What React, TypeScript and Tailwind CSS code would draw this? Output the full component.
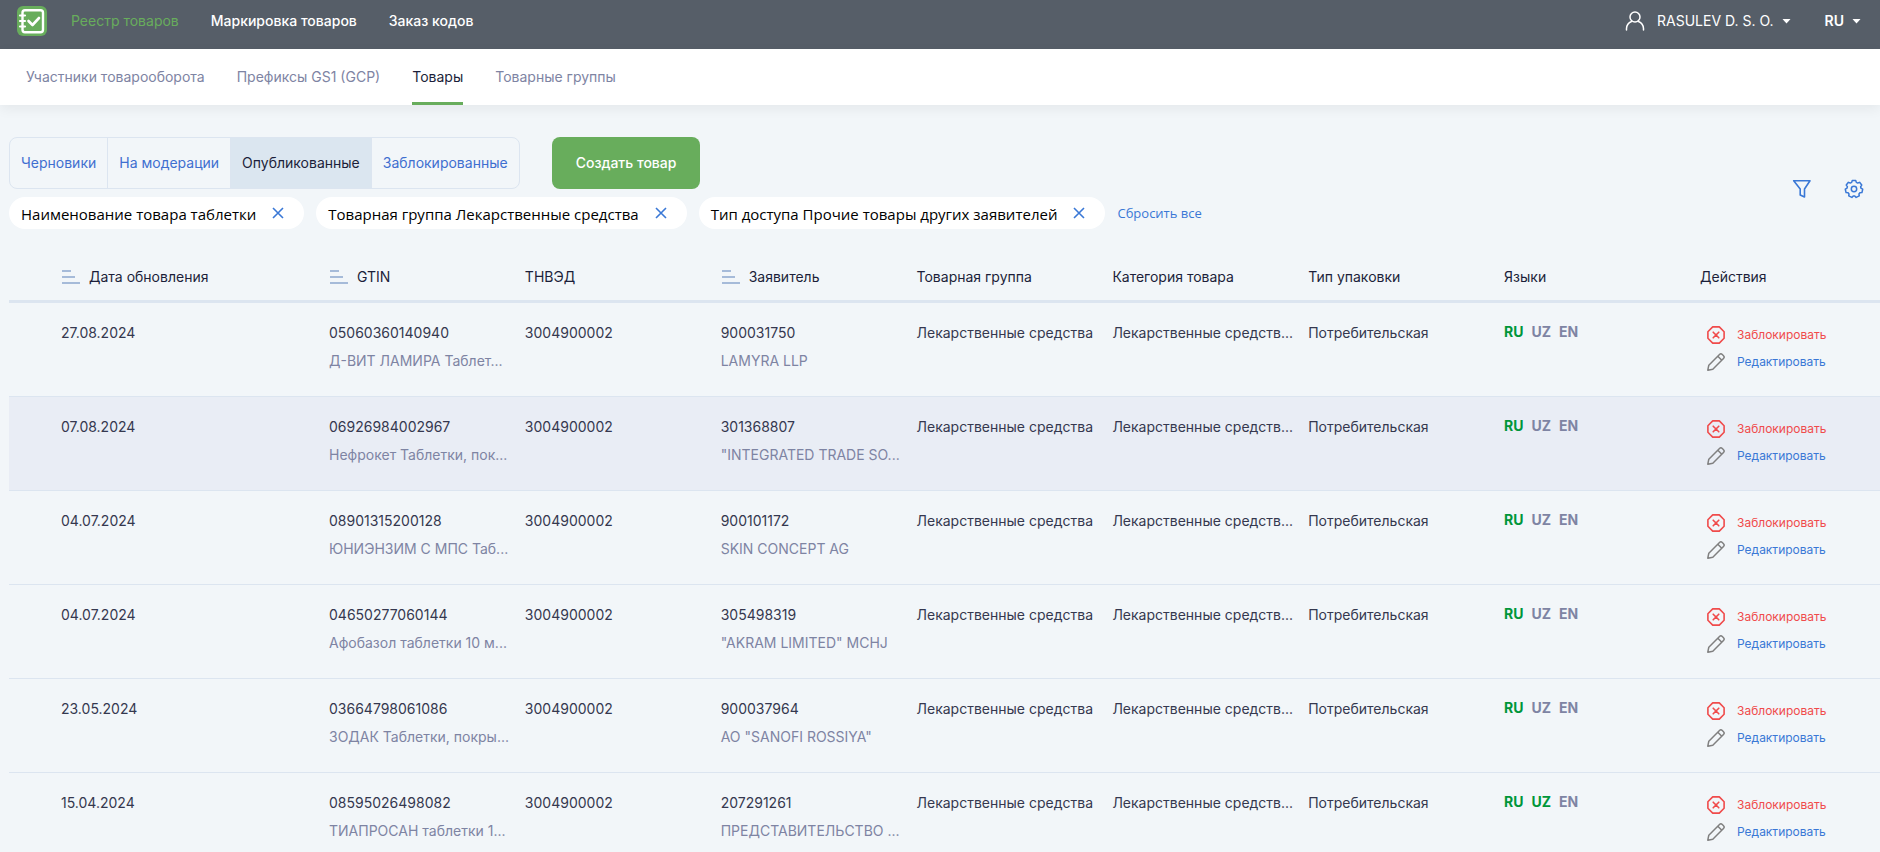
import type { ReactNode } from "react";

const mainNav = ["Реестр товаров", "Маркировка товаров", "Заказ кодов"];
const subNav = ["Участники товарооборота", "Префиксы GS1 (GCP)", "Товары", "Товарные группы"];
const statuses = ["Черновики", "На модерации", "Опубликованные", "Заблокированные"];
const filters = [
  "Наименование товара таблетки",
  "Товарная группа Лекарственные средства",
  "Тип доступа Прочие товары других заявителей",
];

interface Row {
  date: string;
  gtin: string;
  name: string;
  inn: string;
  company: string;
  uz?: boolean;
}

const rows: Row[] = [
  { date: "27.08.2024", gtin: "05060360140940", name: "Д-ВИТ ЛАМИРА Таблет...", inn: "900031750", company: "LAMYRA LLP" },
  { date: "07.08.2024", gtin: "06926984002967", name: "Нефрокет Таблетки, пок...", inn: "301368807", company: "\"INTEGRATED TRADE SO..." },
  { date: "04.07.2024", gtin: "08901315200128", name: "ЮНИЭНЗИМ С МПС Таб...", inn: "900101172", company: "SKIN CONCEPT AG" },
  { date: "04.07.2024", gtin: "04650277060144", name: "Афобазол таблетки 10 м...", inn: "305498319", company: "\"AKRAM LIMITED\" MCHJ" },
  { date: "23.05.2024", gtin: "03664798061086", name: "ЗОДАК Таблетки, покры...", inn: "900037964", company: "АО \"SANOFI ROSSIYA\"" },
  { date: "15.04.2024", gtin: "08595026498082", name: "ТИАПРОСАН таблетки 1...", inn: "207291261", company: "ПРЕДСТАВИТЕЛЬСТВО ...", uz: true },
];

function Logo() {
  return (
    <svg width="30" height="30" viewBox="0 0 30 30" fill="none" aria-hidden="true">
      <rect width="30" height="30" rx="6" fill="#68ad5c" />
      <rect x="5.500" y="4.200" width="20.500" height="22" rx="2.500" stroke="#fff" strokeWidth="2.400" />
      <path d="M3 9.500h5M3 15h5M3 20.500h5" stroke="#fff" strokeWidth="2.200" strokeLinecap="round" />
      <path d="M11.500 15l4 4 6.500-7" stroke="#fff" strokeWidth="2.600" strokeLinecap="round" strokeLinejoin="round" />
    </svg>
  );
}

function UserIcon() {
  return (
    <svg width="20" height="20" viewBox="0 0 20 20" fill="none" stroke="#fff" strokeWidth="1.5" aria-hidden="true">
      <circle cx="10" cy="6" r="5" />
      <path d="M1.500 19v-1.500a8 8 0 0 1 5-7M18.500 19v-1.500a8 8 0 0 0-5-7" strokeLinecap="round" />
    </svg>
  );
}

function Caret() {
  return (
    <svg width="9" height="5" viewBox="0 0 9 5" fill="#fff" aria-hidden="true">
      <path d="M0.500 0h8L4.500 4.500z" />
    </svg>
  );
}

function FilterIcon() {
  return (
    <svg width="20" height="20" viewBox="0 0 20 20" fill="none" stroke="#3a78d6" strokeWidth="1.600" strokeLinejoin="round" aria-hidden="true">
      <path d="M1.700 1.700h16.300l-5.500 8.300v8l-4.300-2v-6z" />
    </svg>
  );
}

const gearPoints = Array.from({ length: 7 }, (_, k) => {
  const mid = -Math.PI / 2 + (k * 2 * Math.PI) / 7;
  return [
    [-0.2, 8.7],
    [0.2, 8.7],
    [0.34, 7],
    [0.56, 7],
  ]
    .map(([da, r]) => `${(10 + r * Math.cos(mid + da)).toFixed(2)},${(10 + r * Math.sin(mid + da)).toFixed(2)}`)
    .join(" ");
}).join(" ");

function GearIcon() {
  return (
    <svg width="20" height="20" viewBox="0 0 20 20" fill="none" stroke="#3a78d6" strokeWidth="1.5" strokeLinejoin="round" aria-hidden="true">
      <circle cx="10" cy="10" r="2.700" />
      <polygon points={gearPoints} />
    </svg>
  );
}

function SortIcon() {
  return (
    <svg width="18" height="16" viewBox="0 0 18 16" fill="#a6bbd9" aria-hidden="true">
      <path d="M0 1h9v2H0zM0 7h13v2H0zM0 13h18v2H0z" />
    </svg>
  );
}

function CloseIcon() {
  return (
    <svg width="12" height="12" viewBox="0 0 12 12" fill="none" stroke="#3a78d6" strokeWidth="1.6" aria-hidden="true">
      <path d="M1 1l10 10M11 1L1 11" />
    </svg>
  );
}

function BlockIcon() {
  return (
    <svg width="18" height="18" viewBox="0 0 18 18" fill="none" stroke="#f04b4b" strokeWidth="1.600" strokeLinejoin="round" aria-hidden="true">
      <path d="M5.700 0.900h6.600L17.100 5.700v6.600L12.300 17.100H5.700L0.900 12.300V5.700z" />
      <path d="M6.200 6.200l5.600 5.600M11.800 6.200l-5.600 5.600" strokeLinecap="round" />
    </svg>
  );
}

function PencilIcon() {
  return (
    <svg width="18" height="18" viewBox="0 0 18 18" fill="none" stroke="#808080" strokeWidth="1.500" strokeLinejoin="round" aria-hidden="true">
      <path d="M0.800 17.200l1-5L12.500 1.500a2 2 0 0 1 2.800 0l1.200 1.200a2 2 0 0 1 0 2.800L5.800 16.200zM10.800 3.200l4 4" />
    </svg>
  );
}

function Th({ children, sortable }: { children?: ReactNode; sortable?: boolean }) {
  return (
    <th scope="col" className="h-[50px] border-b-[3px] border-[#dce5f0] p-0 text-left font-normal">
      {sortable ? (
        <button type="button" className="flex items-center gap-[9px] pl-px">
          <SortIcon />
          {children}
        </button>
      ) : (
        children
      )}
    </th>
  );
}

export default function App() {
  return (
    <div className="h-screen overflow-hidden bg-[#f2f6f9] font-[Inter,'Noto_Sans',sans-serif] text-[14px] leading-5 text-[#1c1f3a]">
      <header className="flex h-[49px] items-start justify-between bg-[#565e68] pt-[6px] pr-[19px] pl-[17px] text-white">
        <nav className="flex h-[30px] items-center gap-8" aria-label="Главное меню">
          <a href="#home" className="mr-[-8px]" aria-label="Главная">
            <Logo />
          </a>
          {mainNav.map((item, i) => (
            <a key={item} href="#main" className={i === 0 ? "text-[#68ad5c]" : "font-medium"}>
              {item}
            </a>
          ))}
        </nav>
        <div className="flex h-[30px] items-center gap-[34px]">
          <button type="button" className="flex items-center gap-2">
            <UserIcon />
            <span className="pl-1">RASULEV D. S. O.</span>
            <Caret />
          </button>
          <button type="button" className="flex items-center gap-2 font-semibold">
            RU
            <Caret />
          </button>
        </div>
      </header>

      <nav className="relative flex h-14 gap-8 bg-white px-[26px] text-[#7e84a3] shadow-[0_4px_12px_rgba(0,0,0,0.06)]" aria-label="Разделы">
        {subNav.map((item) => (
          <a
            key={item}
            href="#section"
            className={
              item === "Товары"
                ? "flex items-center border-y-[3px] border-t-transparent border-b-[#68ad5c] text-[#1c1f3a]"
                : "flex items-center"
            }
          >
            {item}
          </a>
        ))}
      </nav>

      <main className="pt-8 pl-[9px]">
        <div className="flex items-center justify-between pr-4">
          <div>
            <div className="flex gap-8">
              <div className="flex h-[52px] divide-x divide-[#dce5f0] overflow-hidden rounded-lg border border-[#dce5f0]">
                {statuses.map((s) => (
                  <button
                    key={s}
                    type="button"
                    className={s === "Опубликованные" ? "bg-[#dbe6f0] px-[11px]" : "px-[11px] text-[#3f6fd0]"}
                  >
                    {s}
                  </button>
                ))}
              </div>
              <button type="button" className="rounded-lg bg-[#68ad5c] px-6 font-medium text-white">
                Создать товар
              </button>
            </div>
            <div className="mt-2 flex items-center gap-3 font-['Open_Sans',sans-serif]">
              {filters.map((f) => (
                <span key={f} className="flex h-8 items-center gap-4 rounded-full bg-white pr-5 pl-3 text-[15px] text-black">
                  <span className="pt-[2px]">{f}</span>
                  <button type="button" aria-label="Удалить фильтр">
                    <CloseIcon />
                  </button>
                </span>
              ))}
              <button type="button" className="text-[13px] text-[#3a78d6]">
                Сбросить все
              </button>
            </div>
          </div>
          <div className="flex gap-8 pt-3">
            <button type="button" aria-label="Фильтр">
              <FilterIcon />
            </button>
            <button type="button" aria-label="Настройки">
              <GearIcon />
            </button>
          </div>
        </div>

        <table className="mt-[24px] w-full table-fixed border-separate border-spacing-0 whitespace-nowrap">
          <colgroup>
            <col className="w-[52px]" />
            <col className="w-[268px]" />
            <col />
            <col />
            <col />
            <col />
            <col />
            <col />
            <col />
            <col className="w-[180px]" />
          </colgroup>
          <thead>
            <tr>
              <Th />
              <Th sortable>Дата обновления</Th>
              <Th sortable>GTIN</Th>
              <Th>ТНВЭД</Th>
              <Th sortable>Заявитель</Th>
              <Th>Товарная группа</Th>
              <Th>Категория товара</Th>
              <Th>Тип упаковки</Th>
              <Th>Языки</Th>
              <Th>Действия</Th>
            </tr>
          </thead>
          <tbody className="text-[#35384f] [&_td]:h-[94px] [&_td]:border-b [&_td]:border-[#dce5f0] [&_td]:p-0 [&_td]:pt-5 [&_td]:align-top">
            {rows.map((r, i) => (
              <tr key={r.gtin} className={i === 1 ? "bg-[#e9edf5]" : ""}>
                <td />
                <td>{r.date}</td>
                <td>
                  <div>{r.gtin}</div>
                  <div className="mt-2 text-[#7e84a3]">{r.name}</div>
                </td>
                <td>3004900002</td>
                <td>
                  <div>{r.inn}</div>
                  <div className="mt-2 text-[#7e84a3]">{r.company}</div>
                </td>
                <td>Лекарственные средства</td>
                <td>Лекарственные средств...</td>
                <td>Потребительская</td>
                <td>
                  <div className="flex gap-2 leading-[18px] font-bold text-[#7e84a3]">
                    <span className="text-[#00963a]">RU</span>
                    <span className={r.uz ? "text-[#00963a]" : ""}>UZ</span>
                    <span>EN</span>
                  </div>
                </td>
                <td>
                  <div className="flex flex-col gap-[7px] pt-[2px] pl-[7px] text-[12px]">
                    <button type="button" className="flex items-center gap-3 text-[#f04b4b]">
                      <BlockIcon />
                      Заблокировать
                    </button>
                    <button type="button" className="flex items-center gap-3 text-[#3a78d6]">
                      <PencilIcon />
                      Редактировать
                    </button>
                  </div>
                </td>
              </tr>
            ))}
          </tbody>
        </table>
      </main>
    </div>
  );
}
